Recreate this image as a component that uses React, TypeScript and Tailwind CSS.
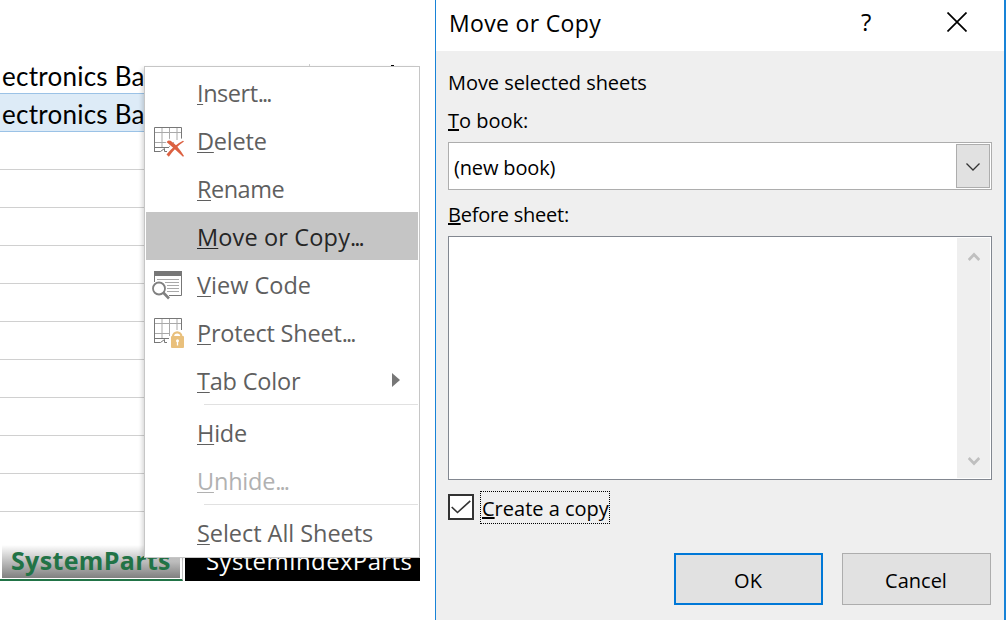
import type { ReactNode } from "react";

function GridIcon({ children }: { children: ReactNode }) {
  return (
    <svg width="34" height="34" viewBox="0 0 34 34" fill="none" className="block">
      <path d="M3 5.5H29M3 15.5H22M10 1V20M17.500 1V20M25 1V13" stroke="#a9a9a9" />
      <path d="M2.500 25V0.500H29.500V13M2 20.500H17M2 24.500H8.500L12.500 21.500V24.500H15" stroke="#777777" />
      {children}
    </svg>
  );
}

function DeleteIcon() {
  return (
    <GridIcon>
      <path d="M15 13L31 29M31 13L15 29" stroke="#ffffff" strokeWidth="5" />
      <path d="M14.800 15.200Q15.500 12.500 18.600 13.800Q26 19 32 29L31 29.800Q23 22 14.800 15.200Z" fill="#dc6142" />
      <path d="M32 14.500L31 13.700Q22 18 14.500 27.500L16.800 29.800Q23 20.500 32 14.500Z" fill="#dc6142" />
    </GridIcon>
  );
}

function ProtectIcon() {
  return (
    <GridIcon>
      <path d="M18 18V14L21 12H31V18V32H17V18Z" fill="#ffffff" />
      <path d="M21 18V18.500A4.200 4.200 0 0 1 29.400 18.500" stroke="#e9c07c" strokeWidth="2.200" />
      <rect x="19" y="18" width="13" height="12" rx="1" fill="#e9c07c" />
      <path d="M25.500 22V27.500" stroke="#ffffff" strokeWidth="1.300" />
      <circle cx="25.500" cy="22.800" r="1.500" fill="#ffffff" />
    </GridIcon>
  );
}

function CodeIcon() {
  return (
    <svg width="34" height="34" viewBox="0 0 34 34" fill="none" className="block">
      <path d="M2 0H30V5H2Z" fill="#777777" />
      <path d="M2.500 5V11M29.500 5V24.500H17" stroke="#777777" />
      <path d="M5 8.500H27M13 11.500H27M15 14.500H27M15 17.500H27M15 20.500H27" stroke="#a9a9a9" />
      <circle cx="7" cy="17.500" r="6" stroke="#808080" strokeWidth="1.800" fill="#ffffff" />
      <path d="M11.200 21.500L17 27.500" stroke="#808080" strokeWidth="2.600" />
    </svg>
  );
}

function Key({ children }: { children: ReactNode }) {
  return <span className="underline decoration-1 underline-offset-2 [text-decoration-skip-ink:none]">{children}</span>;
}

function DialogKey({ children }: { children: ReactNode }) {
  return <span className="underline decoration-2 underline-offset-1 [text-decoration-skip-ink:none]">{children}</span>;
}

type ItemProps = {
  first: string;
  rest: string;
  dots?: boolean;
  icon?: ReactNode;
  iconTop?: string;
  tone?: string;
  trailing?: ReactNode;
  tracking?: string;
};

function MenuItem({
  first,
  rest,
  dots,
  icon,
  iconTop = "pt-[11px]",
  tone = "text-[#5f5f5f]",
  trailing,
  tracking = "tracking-[-0.2px]",
}: ItemProps) {
  return (
    <div className={`flex h-12 items-start ${tone}`}>
      <div className={`w-[51px] shrink-0 pl-[6px] ${iconTop}`}>{icon}</div>
      <div className={`grow pt-[9px] text-[23.5px] leading-8 whitespace-nowrap ${tracking}`}>
        <Key>{first}</Key>
        {rest}
        {dots && <span className="tracking-[-1.9px]">...</span>}
      </div>
      {trailing}
    </div>
  );
}

function Separator() {
  return <div className="ml-[58px] h-1 border-t border-[#e1e1e1]" />;
}

function ContextMenu() {
  return (
    <div className="absolute top-[66px] left-[144px] h-[492px] w-[276px] border border-[#c6c6c6] bg-white p-px shadow-[-3px_1px_4px_-1px_rgba(0,0,0,0.15)]">
      <MenuItem first="I" rest="nsert" dots tracking="tracking-[-0.45px]" />
      <MenuItem first="D" rest="elete" icon={<DeleteIcon />} />
      <MenuItem first="R" rest="ename" tracking="tracking-[-0.5px]" />
      <MenuItem first="M" rest="ove or Copy" dots tone="bg-[#c5c5c5] text-[#262626]" tracking="tracking-[0.15px]" />
      <MenuItem first="V" rest="iew Code" icon={<CodeIcon />} tracking="tracking-[0px]" />
      <MenuItem first="P" rest="rotect Sheet" dots icon={<ProtectIcon />} iconTop="pt-[10px]" />
      <MenuItem
        first="T"
        rest="ab Color"
        trailing={
          <svg width="8" height="14" viewBox="0 0 8 14" className="mt-[17px] mr-[18px]">
            <path d="M0 0L8 7L0 14Z" fill="#777777" />
          </svg>
        }
      />
      <Separator />
      <MenuItem first="H" rest="ide" />
      <MenuItem first="U" rest="nhide" dots tone="text-[#b1b1b1]" />
      <Separator />
      <MenuItem first="S" rest="elect All Sheets" tracking="tracking-[-0.05px]" />
    </div>
  );
}

function Spreadsheet() {
  return (
    <section className="relative flex h-[620px] w-[420px] shrink-0 flex-col overflow-hidden bg-white">
      <div className="flex h-[66px] shrink-0 items-end">
        <div className="ml-[309px] h-[2px] w-px bg-[#d0d0d0]" />
        <div className="ml-[81px] h-px w-[3px] bg-black" />
      </div>
      <div className="h-7 border-b border-[#9bc2e6] pl-[2px] font-[Lato] text-[26px] leading-5 tracking-[0.25px] whitespace-nowrap text-black">
        ectronics Ba
      </div>
      <div className="h-[38px] border-b border-[#9bc2e6] bg-[#ddebf7] pl-[2px] font-[Lato] text-[26px] leading-[40px] tracking-[0.25px] whitespace-nowrap text-black">
        ectronics Ba
      </div>
      {Array.from({ length: 10 }, (_, i) => (
        <div key={i} className="h-[38px] shrink-0 border-b border-[#d0d0d0]" />
      ))}
      <div className="mt-[33px] flex h-9">
        <div className="h-9 w-[183px] border-r border-b-2 border-r-[#c0c0c0] border-b-[#217346] pl-[2px]">
          <div className="h-[33px] w-[178px] bg-linear-to-b from-white to-[#808080] pl-[9px] text-[25px] leading-[30px] font-bold tracking-[0.35px] whitespace-nowrap text-[#217346]">
            SystemParts
          </div>
        </div>
        <div className="ml-[2px] h-9 grow bg-black pl-[21px] text-[24px] leading-8 tracking-[0.35px] whitespace-nowrap text-white">
          SystemIndexParts
        </div>
      </div>
      <ContextMenu />
    </section>
  );
}

function Dialog() {
  return (
    <section className="ml-[15px] flex h-[620px] w-[571px] flex-col border-r-2 border-l border-[#1883d7] bg-[#efefef] text-[20px] text-black">
      <header className="flex h-[51px] shrink-0 items-start bg-white">
        <h1 className="w-[425px] pt-[7px] pl-[13px] text-[23px] leading-8 tracking-[0.33px] whitespace-nowrap">
          Move or Copy
        </h1>
        <span className="w-[86px] pt-[6px] text-[24px] leading-8">?</span>
        <svg width="20" height="20" viewBox="0 0 20 20" className="mt-3">
          <path d="M0.500 0.500L19.500 19.500M19.500 0.500L0.500 19.500" stroke="#000000" strokeWidth="1.700" />
        </svg>
      </header>
      <div className="flex flex-col pr-3 pl-3">
        <p className="mt-[18px] h-7 leading-7 tracking-[-0.05px]">Move selected sheets</p>
        <p className="mt-[10px] h-7 leading-7">
          <DialogKey>T</DialogKey>o book:
        </p>
        <div className="mt-[7px] flex h-12 items-center border border-[#adadad] bg-white p-px pl-[5px]">
          <span className="grow pt-[3px] leading-7 tracking-[-0.15px]">(new book)</span>
          <button className="flex h-11 w-[34px] items-center justify-center border border-[#adadad] bg-[#e1e1e1] pt-px">
            <svg width="14" height="8" viewBox="0 0 14 8" fill="none">
              <path d="M0.500 0.500L7 7L13.500 0.500" stroke="#333333" strokeWidth="1.300" />
            </svg>
          </button>
        </div>
        <p className="mt-[11px] h-7 leading-7 tracking-[-0.25px]">
          <DialogKey>B</DialogKey>efore sheet:
        </p>
        <div className="mt-[7px] flex h-[244px] justify-end border border-[#828790] bg-white p-px">
          <div className="flex w-[33px] flex-col items-center justify-between bg-[#efefef] pt-[14px] pb-3">
            <svg width="12" height="10" viewBox="0 0 12 10" fill="none">
              <path d="M0.700 8L6 2.500L11.300 8" stroke="#bfbfbf" strokeWidth="2.800" />
            </svg>
            <svg width="12" height="10" viewBox="0 0 12 10" fill="none">
              <path d="M0.700 2L6 7.500L11.300 2" stroke="#bfbfbf" strokeWidth="2.800" />
            </svg>
          </div>
        </div>
        <label className="mt-[11px] flex h-[33px] items-start">
          <span className="mt-[3px] flex size-[26px] items-center justify-center border-2 border-[#333333] bg-white">
            <svg width="20" height="14" viewBox="0 0 20 14" fill="none">
              <path d="M0.700 7L6.500 12.500L19.300 0.800" stroke="#333333" strokeWidth="1.600" />
            </svg>
          </span>
          <span className="ml-[6px] h-[33px] w-[130px] border border-dotted border-black pl-px leading-[33px] whitespace-nowrap">
            <DialogKey>C</DialogKey>reate a copy
          </span>
        </label>
        <div className="mt-[29px] mr-px flex justify-end gap-[19px]">
          <button className="h-[52px] w-[149px] border-2 border-[#0078d7] bg-[#e1e1e1] pt-[3px] pr-px">OK</button>
          <button className="h-[52px] w-[149px] border border-[#adadad] bg-[#e1e1e1] pt-[3px] pr-px">Cancel</button>
        </div>
      </div>
    </section>
  );
}

export default function App() {
  return (
    <main className="flex h-[620px] w-[1006px] overflow-hidden bg-white font-['Open_Sans','Noto_Sans',sans-serif]">
      <Spreadsheet />
      <Dialog />
    </main>
  );
}
